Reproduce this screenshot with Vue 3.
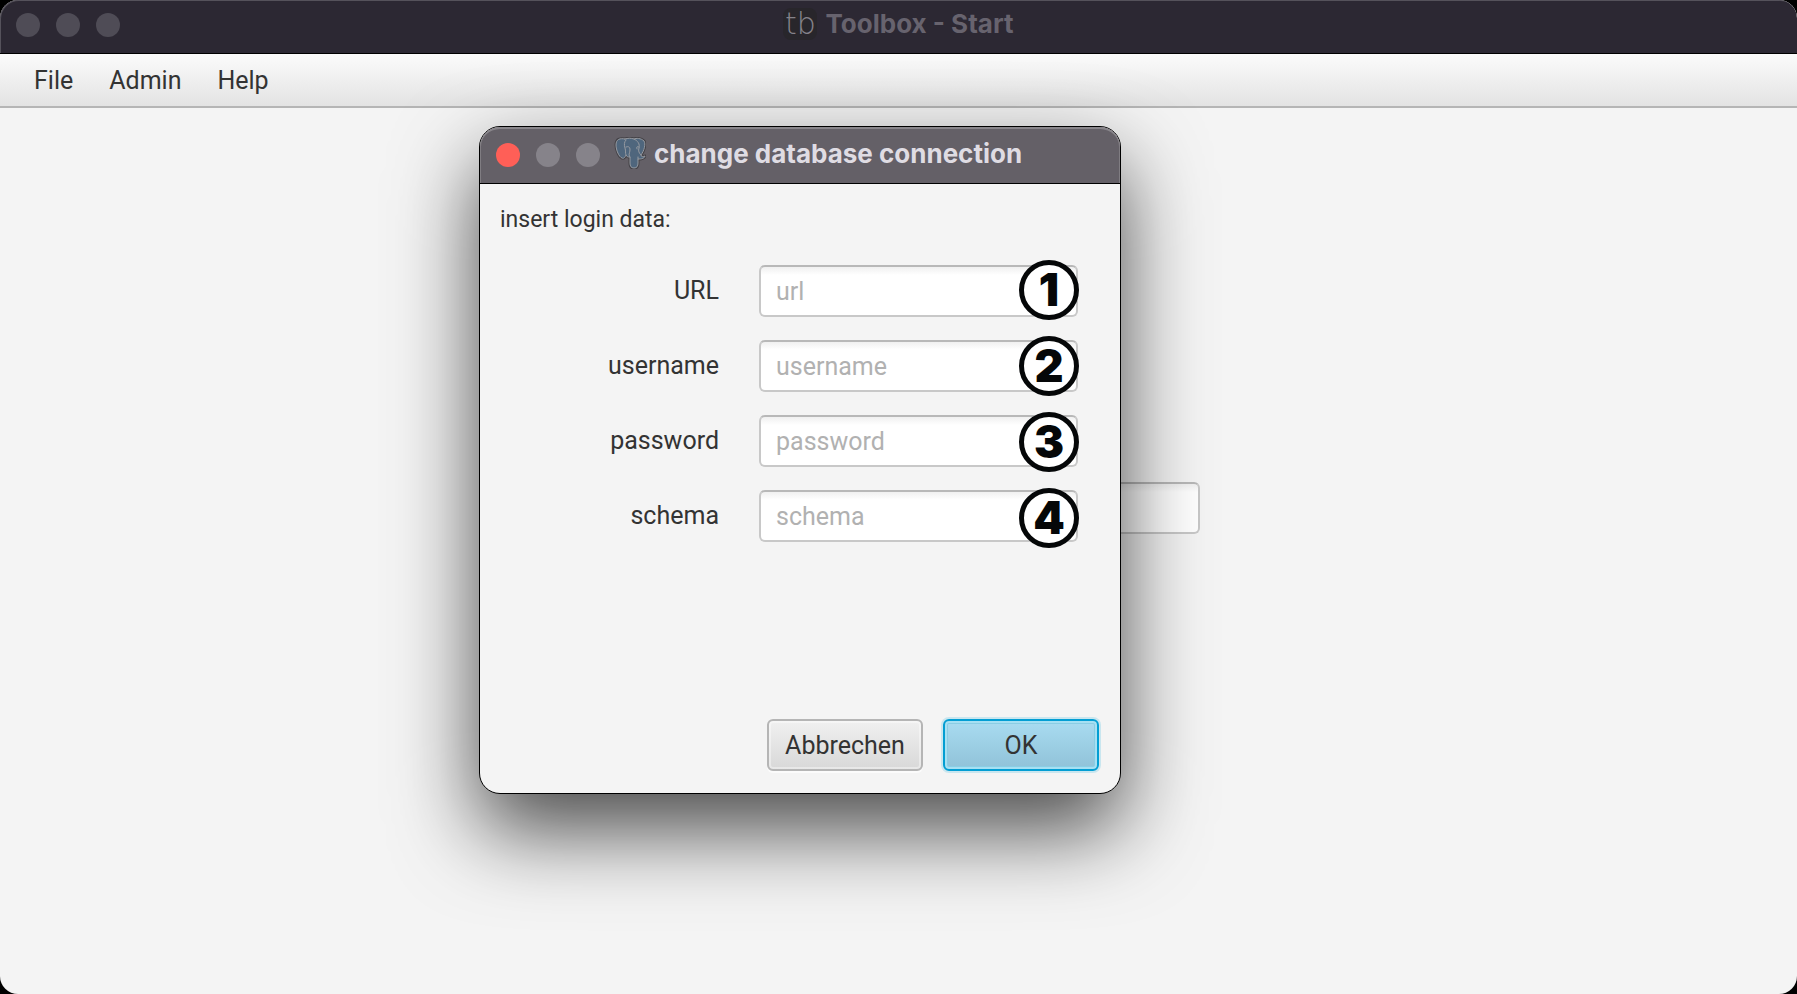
<script setup>
import { reactive } from 'vue'

const menus = ['File', 'Admin', 'Help']
const fields = [
  { id: 'url', label: 'URL', type: 'text' },
  { id: 'username', label: 'username', type: 'text' },
  { id: 'password', label: 'password', type: 'password' },
  { id: 'schema', label: 'schema', type: 'text' },
]
const login = reactive({ url: '', username: '', password: '', schema: '' })
</script>

<template>
  <div class="window">
    <header class="titlebar">
      <div class="lights">
        <button type="button" aria-label="Close window"></button>
        <button type="button" aria-label="Minimize window"></button>
        <button type="button" aria-label="Zoom window"></button>
      </div>
      <div class="title"><span class="logo">tb</span><span>Toolbox - Start</span></div>
    </header>
    <nav class="menubar">
      <button v-for="m in menus" :key="m" type="button">{{ m }}</button>
    </nav>
    <main class="content">
      <input class="field start-field" type="text" aria-label="Start" />
    </main>

    <section class="dialog" role="dialog" aria-labelledby="dialog-title">
      <header class="dialog-bar">
        <div class="lights">
          <button class="close" type="button" aria-label="Close dialog"></button>
          <button type="button" aria-label="Minimize dialog"></button>
          <button type="button" aria-label="Zoom dialog"></button>
        </div>
        <svg class="elephant" viewBox="0 0 32 32" aria-hidden="true">
          <g stroke-linejoin="round" stroke-linecap="round">
            <path class="rim" d="M11 2C6 1 2 2 2 8c0 5 3 12 6 13 2 1 3-1 4-3 1 2 2 2 4 2v6c0 3 1 5 4 5s4-2 4-5v-4c3 0 6 0 7-3-2 1-4 1-4-1 3-4 5-11 3-14-3-3-8-3-10-2-3-1-6-1-9 0z" />
            <path class="skin" d="M11 2C6 1 2 2 2 8c0 5 3 12 6 13 2 1 3-1 4-3 1 2 2 2 4 2v6c0 3 1 5 4 5s4-2 4-5v-4c3 0 6 0 7-3-2 1-4 1-4-1 3-4 5-11 3-14-3-3-8-3-10-2-3-1-6-1-9 0z" />
            <path class="crease" d="M12 3c-2 2-2 5-1 8 1 3 0 5 1 7M12 10c2-1 4 0 4 2 0 3-1 5-1 6l1 2M20 2c4 2 6 5 5 9-1 3 0 5 2 7M25 10c-2-1-3 0-2 2M24 20v2" />
          </g>
        </svg>
        <h1 id="dialog-title">change database connection</h1>
      </header>
      <form class="dialog-body" @submit.prevent>
        <p class="hint">insert login data:</p>
        <div class="form">
          <div v-for="f in fields" :key="f.id" class="row">
            <label :for="f.id">{{ f.label }}</label>
            <input :id="f.id" v-model="login[f.id]" class="field" :type="f.type" :placeholder="f.id" />
          </div>
          <div class="badges">
            <span v-for="(f, i) in fields" :key="f.id" class="badge">{{ i + 1 }}</span>
          </div>
        </div>
        <div class="actions">
          <button type="button" class="btn">Abbrechen</button>
          <button type="submit" class="btn primary">OK</button>
        </div>
      </form>
    </section>
  </div>
</template>

<style>
html {
  background: #000;
}
</style>

<style scoped>
.window {
  position: relative;
  display: flex;
  flex-direction: column;
  box-sizing: border-box;
  min-height: 100vh;
  border-radius: 18px;
  overflow: hidden;
  background: #f4f4f4;
  color: #333;
  font: 25px/32px Roboto, "Liberation Sans", sans-serif;
}
button,
input {
  font: inherit;
  color: inherit;
  box-sizing: border-box;
  margin: 0;
}
.titlebar {
  display: flex;
  align-items: center;
  justify-content: center;
  box-sizing: border-box;
  height: 54px;
  padding-bottom: 6px;
  background: #2c2833;
  border-bottom: 1px solid #000;
  border-radius: 18px 18px 0 0;
  box-shadow: inset 1px 1px 0 #55525b;
  color: #67636e;
  font: 700 26px/32px Inter, sans-serif;
}
.titlebar .lights {
  position: absolute;
  left: 16px;
  top: 13px;
}
.lights {
  display: flex;
  gap: 16px;
}
.lights button {
  width: 24px;
  height: 24px;
  padding: 0;
  border: 0;
  border-radius: 50%;
  background: #4f4c56;
}
.title {
  display: flex;
  align-items: center;
  gap: 8px;
}
.logo {
  width: 34px;
  height: 32px;
  border-radius: 8px;
  background: #28262b;
  color: #85838a;
  font: 200 30px/32px "DejaVu Sans Light", "DejaVu Sans", sans-serif;
  text-align: center;
}
.menubar {
  display: flex;
  gap: 36px;
  box-sizing: border-box;
  height: 54px;
  padding: 2px 34px 0;
  background: linear-gradient(#fbfbfb, #e3e3e3);
  border-bottom: 2px solid #b5b5b5;
}
.menubar button {
  padding: 0;
  border: 0;
  background: none;
}
.content {
  flex: 1;
  padding-top: 374px;
  text-align: center;
}
.field {
  height: 52px;
  padding: 0 15px;
  border: 2px solid #c8c8c8;
  border-top-color: #b8b8b8;
  border-radius: 6px;
  background: linear-gradient(#f0f0f0, #fff 8px);
  outline: 0;
}
.field::placeholder {
  color: #b1b1b1;
  opacity: 1;
}
.start-field {
  display: block;
  width: 602px;
  margin: 0 auto;
}
.dialog {
  position: absolute;
  left: 479px;
  top: 126px;
  width: 642px;
  box-sizing: border-box;
  border: 1px solid #000;
  border-radius: 21px;
  background: #f4f4f4;
  box-shadow: 0 36px 84px rgba(0, 0, 0, 0.7);
}
.dialog-bar {
  display: flex;
  align-items: center;
  box-sizing: border-box;
  height: 57px;
  padding: 0 16px;
  background: #646067;
  border-bottom: 1px solid #000;
  border-radius: 20px 20px 0 0;
  box-shadow: inset 0 2px 0 #89868b, inset 1px 0 0 #807d82, inset -1px 0 0 #807d82;
}
.dialog-bar .lights button {
  background: #86838a;
}
.dialog-bar .lights .close {
  background: #ff5f57;
}
.elephant {
  width: 32px;
  height: 32px;
  margin: 0 8px 4px 14px;
}
.rim {
  fill: none;
  stroke: #444247;
  stroke-width: 3;
}
.skin {
  fill: #4f667d;
  stroke: #969aa1;
  stroke-width: 1;
}
.crease {
  fill: none;
  stroke: #969aa1;
  stroke-width: 1;
}
h1 {
  margin: 0 0 2px;
  color: #dfdce3;
  font: 700 26px/32px Inter, sans-serif;
  white-space: nowrap;
}
.dialog-body {
  padding: 20px 21px 22px 20px;
}
.hint {
  margin: 0 0 29px;
  font-size: 23px;
}
.form {
  position: relative;
  display: flex;
  flex-direction: column;
  gap: 23px;
  padding-right: 21px;
}
.row {
  display: grid;
  grid-template-columns: 1fr 319px;
  gap: 40px;
  align-items: center;
}
.row label {
  text-align: right;
}
.badges {
  position: absolute;
  top: -5px;
  right: 20px;
  display: flex;
  flex-direction: column;
  gap: 16px;
  pointer-events: none;
}
.badge {
  width: 60px;
  height: 60px;
  box-sizing: border-box;
  border: 5px solid #050708;
  border-radius: 50%;
  background: #fff;
  color: #050708;
  font: 900 45px/50px Inter, sans-serif;
  text-align: center;
}
.actions {
  display: flex;
  justify-content: flex-end;
  gap: 20px;
  margin-top: 177px;
}
.btn {
  width: 156px;
  height: 52px;
  padding: 2px 0 0;
  border: 2px solid #b5b5b5;
  border-radius: 6px;
  background: linear-gradient(#f0f0f0, #d8d8d8);
  box-shadow: inset 0 0 0 2px rgba(255, 255, 255, 0.4), 0 2px 0 #fbfbfb;
}
.primary {
  border-color: #039ed3;
  background: linear-gradient(#a9dcf1, #90c2d8);
  box-shadow: inset 0 0 0 2px #a6e0f3, inset 0 0 0 3px #8acde4, 0 0 0 2px #c9e6ef;
}
</style>
